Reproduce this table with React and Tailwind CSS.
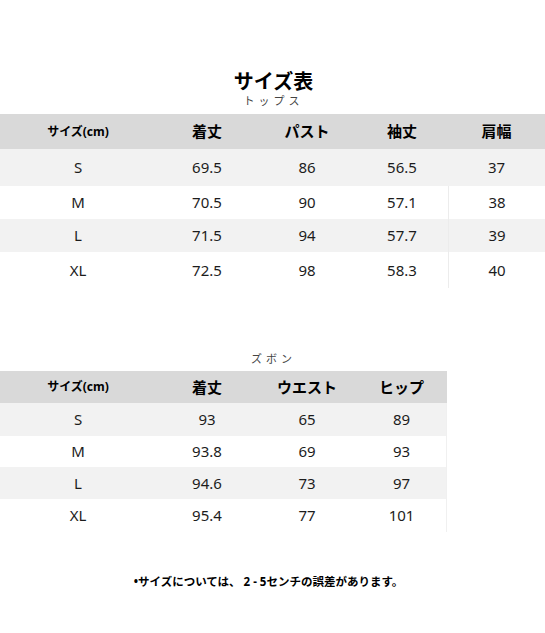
import React from 'react'

const font = { fontFamily: '"Noto Sans", "Noto Sans CJK JP", sans-serif' }

const tops = {
    cols: 'grid-cols-[156px_102px_98px_92px_97px]',
    head: ['着丈', 'パスト', '袖丈', '肩幅'],
    rows: [
        ['S', '69.5', '86', '56.5', '37'],
        ['M', '70.5', '90', '57.1', '38'],
        ['L', '71.5', '94', '57.7', '39'],
        ['XL', '72.5', '98', '58.3', '40'],
    ],
    heights: ['h-[37px]', 'h-[33px]', 'h-[33px]', 'h-[36px]'],
}

const pants = {
    cols: 'grid-cols-[156px_102px_98px_91px]',
    head: ['着丈', 'ウエスト', 'ヒップ'],
    rows: [
        ['S', '93', '65', '89'],
        ['M', '93.8', '69', '93'],
        ['L', '94.6', '73', '97'],
        ['XL', '95.4', '77', '101'],
    ],
    heights: ['h-[33px]', 'h-[31px]', 'h-[32px]', 'h-[33px]'],
}

const SizeTable = ({ data, width, headH, lastLine }) => {
    return (
        <div className={width}>
            <div className={`grid ${data.cols} ${headH} items-center bg-[#d9d9d9] text-black font-bold`}>
                <div className="text-center text-[12px]">サイズ(cm)</div>
                {data.head.map((h) => (
                    <div key={h} className="text-center text-[15px]">{h}</div>
                ))}
            </div>
            {data.rows.map((r, i) => (
                <div
                    key={r[0]}
                    className={`grid ${data.cols} ${data.heights[i]} items-center text-[15px] text-[#1c1c1c] ${i % 2 === 0 ? 'bg-[#f2f2f2]' : 'bg-white'} ${lastLine ? 'border-r border-[#f0f0f0]' : ''}`}
                >
                    {r.map((c, j) => (
                        <div
                            key={j}
                            className={`text-center h-full flex items-center justify-center ${!lastLine && j === 4 && i > 0 ? 'border-l border-[#ececec]' : ''}`}
                        >
                            {c}
                        </div>
                    ))}
                </div>
            ))}
        </div>
    )
}

const App = () => {
    return (
        <div className="w-[545px] h-[633px] bg-white pt-[72px]" style={font}>
            <h1 className="text-center text-[20px] leading-[20px] font-bold text-black pl-[2px]">サイズ表</h1>
            <div className="text-center text-[11px] leading-[12px] tracking-[4px] text-[#444] mt-[3px] mb-[7px] pl-[2px]">トップス</div>
            <SizeTable data={tops} width="w-[545px]" headH="h-[35px]" />
            <div className="h-[64px]" />
            <div className="text-center text-[11px] leading-[14px] tracking-[4px] text-[#444] mb-[5px] pl-[2px]">ズボン</div>
            <SizeTable data={pants} width="w-[447px]" headH="h-[32px]" lastLine />
            <div className="text-center text-[11.5px] font-bold text-black mt-[41px] pr-[8px]">
                •サイズについては、 2 - 5センチの誤差があります。
            </div>
        </div>
    )
}

export default App
